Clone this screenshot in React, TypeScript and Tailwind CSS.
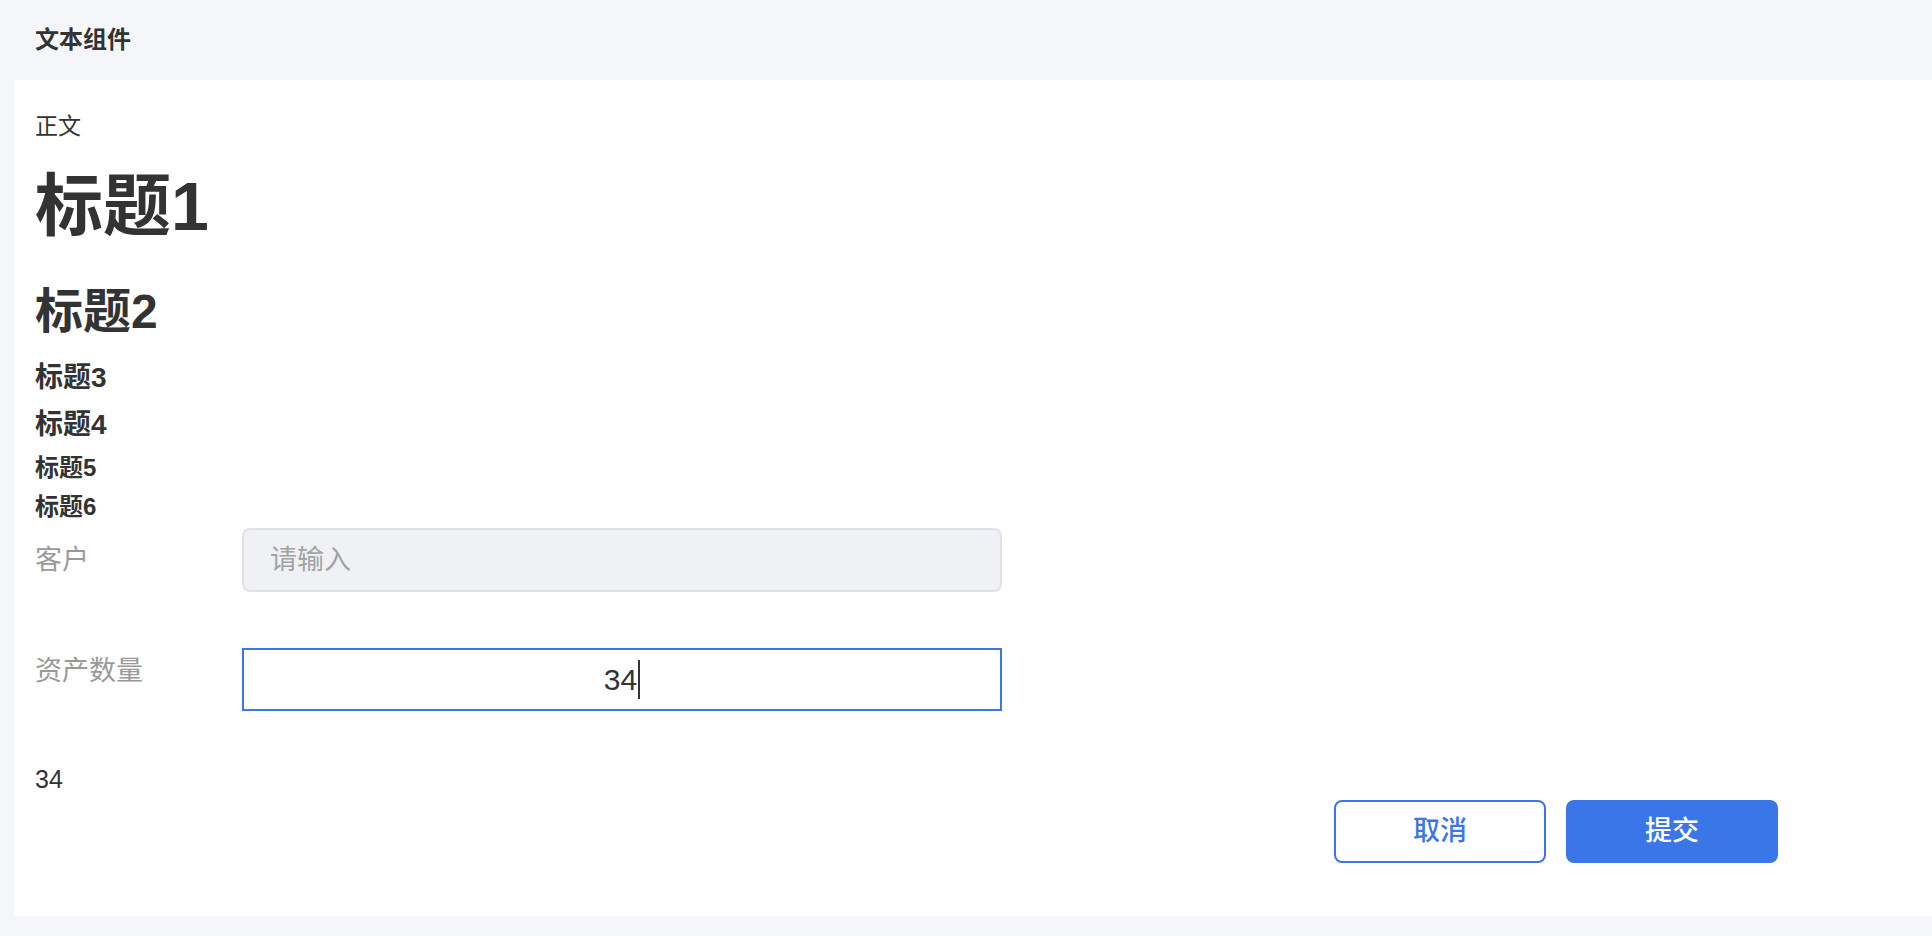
import { useState } from "react";

const FONT = "font-['Liberation_Sans','Noto_Sans_CJK_SC',sans-serif]";

export default function App() {
  const [amount] = useState("34");

  return (
    <div className={`min-h-screen bg-[#f5f6fa] text-[#333] ${FONT}`}>
      <div className="h-[80px] flex items-center pl-[35px]">
        <span className="text-[24px] leading-[32px] font-bold">文本组件</span>
      </div>

      <div className="ml-[14px] bg-white pl-[21px] pr-[154px] pt-[28px] pb-[53px] flex flex-col">
        <p className="text-[23px] leading-[36px]">正文</p>
        <h1 className="mt-[22px] text-[68px] leading-[80px] font-bold">标题1</h1>
        <h2 className="mt-[38px] text-[48px] leading-[56px] font-bold">标题2</h2>
        <h3 className="mt-[20px] text-[28px] leading-[36px] font-bold">标题3</h3>
        <h4 className="mt-[11px] text-[28px] leading-[36px] font-bold">标题4</h4>
        <h5 className="mt-[9px] text-[24px] leading-[32px] font-bold">标题5</h5>
        <h6 className="mt-[7px] text-[24px] leading-[32px] font-bold">标题6</h6>

        {/* 客户 */}
        <div className="mt-[5px] flex items-start">
          <label className="w-[207px] mt-[14px] text-[27px] leading-[36px] text-[#999]">
            客户
          </label>
          <div className="w-[760px] h-[64px] rounded-[8px] border-2 border-[#dfe1e6] bg-[#f0f1f5] flex items-center pl-[26px] text-[27px] text-[#a3a3a3]">
            请输入
          </div>
        </div>

        {/* 资产数量 */}
        <div className="mt-[56px] flex items-start">
          <label className="w-[207px] mt-[5px] text-[27px] leading-[36px] text-[#999]">
            资产数量
          </label>
          <div className="w-[760px] h-[63px] border-2 border-[#3a76e8] bg-white flex items-center justify-center text-[30px] text-[#333]">
            <span className="leading-[36px]">{amount}</span>
            <span className="w-[2px] h-[39px] bg-[#333] ml-[1px]" />
          </div>
        </div>

        <p className="mt-[52px] text-[25px] leading-[32px]">{amount}</p>

        <div className="mt-[5px] flex justify-end gap-[20px]">
          <button
            type="button"
            className="w-[212px] h-[63px] rounded-[8px] border-2 border-[#3a76e8] bg-white text-[#3a76e8] text-[27px] font-medium"
          >
            取消
          </button>
          <button
            type="button"
            className="w-[212px] h-[63px] rounded-[8px] bg-[#3a76e8] text-white text-[27px] font-medium"
          >
            提交
          </button>
        </div>
      </div>
    </div>
  );
}
